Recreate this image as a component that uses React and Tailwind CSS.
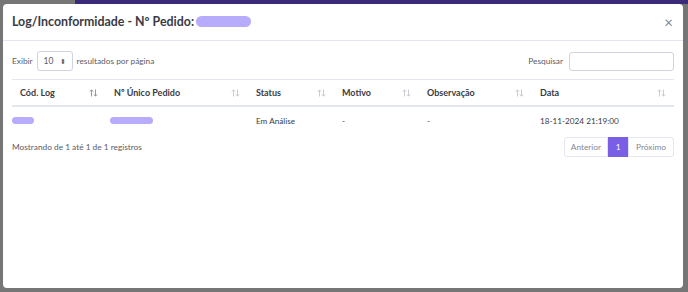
import React from "react";

const font = { fontFamily: "Lato, 'Open Sans', sans-serif" };

function SortIcon({ active }) {
  return (
    <svg width="9" height="8" viewBox="0 0 9 8" className={active ? "text-[#8a8c99]" : "text-[#c4c5cc]"}>
      <path d="M2.5 7.5V1M0.8 2.6L2.5 0.8L4.2 2.6" stroke="currentColor" strokeWidth="0.9" fill="none" />
      <path d="M6.5 0.5V7M4.8 5.4L6.5 7.2L8.2 5.4" stroke="currentColor" strokeWidth="0.9" fill="none" />
    </svg>
  );
}

const columns = [
  { label: "Cód. Log", w: "w-[94px]", active: true },
  { label: "Nº Único Pedido", w: "w-[142px]" },
  { label: "Status", w: "w-[86px]" },
  { label: "Motivo", w: "w-[85px]" },
  { label: "Observação", w: "w-[113px]" },
  { label: "Data", w: "flex-1" },
];

function Blob({ w }) {
  return <span className={`inline-block h-[7px] rounded-full bg-[#b7acfb] ${w}`}></span>;
}

export default function App() {
  return (
    <div className="relative w-[688px] h-[292px] bg-[#767676] overflow-hidden" style={font}>
      <div className="absolute left-[75px] right-0 top-0 h-[4px] bg-[#3b2a78]"></div>
      <div className="absolute left-[3px] top-[4px] w-[680px] h-[284px] bg-white rounded-[4px] text-[#3a3b45]">
        <div className="flex items-center justify-between h-[37px] pl-[9px] pr-[10px] border-b border-[#e3e6f0]">
          <div className="flex items-center text-[12.4px] font-bold text-[#3a3b45]">
            <span>Log/Inconformidade - Nº Pedido:</span>
            <span className="inline-block ml-[2px] w-[55px] h-[11px] rounded-full bg-[#b7acfb]"></span>
          </div>
          <span className="text-[15px] leading-none text-[#858796]">×</span>
        </div>
        <div className="px-[9px] pt-[10px]">
          <div className="flex items-center justify-between h-[20px] text-[8.3px] text-[#5a5c69]">
            <div className="flex items-center gap-[4px]">
              <span>Exibir</span>
              <div className="flex items-center justify-between w-[36px] h-[20px] border border-[#d1d3e2] rounded-[3px] px-[6px] text-[8.5px]">
                <span>10</span>
                <span className="text-[7px] leading-none">⬍</span>
              </div>
              <span>resultados por página</span>
            </div>
            <div className="flex items-center gap-[6px]">
              <span>Pesquisar</span>
              <div className="w-[105px] h-[19px] border border-[#d1d3e2] rounded-[3px]"></div>
            </div>
          </div>
          <div className="mt-[8px] border-t border-[#e3e6f0]">
            <div className="flex h-[27px] items-center border-b-2 border-[#e3e6f0] text-[9px] font-bold text-[#3a3b45]">
              {columns.map((c) => (
                <div key={c.label} className={`${c.w} flex items-center justify-between pl-[8px] pr-[8px]`}>
                  <span>{c.label}</span>
                  <SortIcon active={c.active} />
                </div>
              ))}
            </div>
            <div className="flex h-[28px] items-center text-[8.2px] text-[#3a3b45]">
              <div className="w-[94px]"><Blob w="w-[22px]" /></div>
              <div className="w-[142px] pl-[4px]"><Blob w="w-[43px]" /></div>
              <div className="w-[86px] pl-[8px]">Em Análise</div>
              <div className="w-[85px] pl-[8px]">-</div>
              <div className="w-[113px] pl-[8px]">-</div>
              <div className="flex-1 pl-[8px]">18-11-2024 21:19:00</div>
            </div>
          </div>
          <div className="flex items-center justify-between mt-[2px] text-[8.3px] text-[#5a5c69]">
            <span>Mostrando de 1 até 1 de 1 registros</span>
            <div className="flex h-[20px] text-[8.3px]">
              <span className="flex items-center px-[6px] border border-[#e3e6f0] rounded-l-[3px] text-[#858796]">Anterior</span>
              <span className="flex items-center justify-center w-[20px] bg-[#7a5ee6] text-white">1</span>
              <span className="flex items-center px-[7px] border border-[#e3e6f0] rounded-r-[3px] text-[#858796]">Próximo</span>
            </div>
          </div>
        </div>
      </div>
    </div>
  );
}
